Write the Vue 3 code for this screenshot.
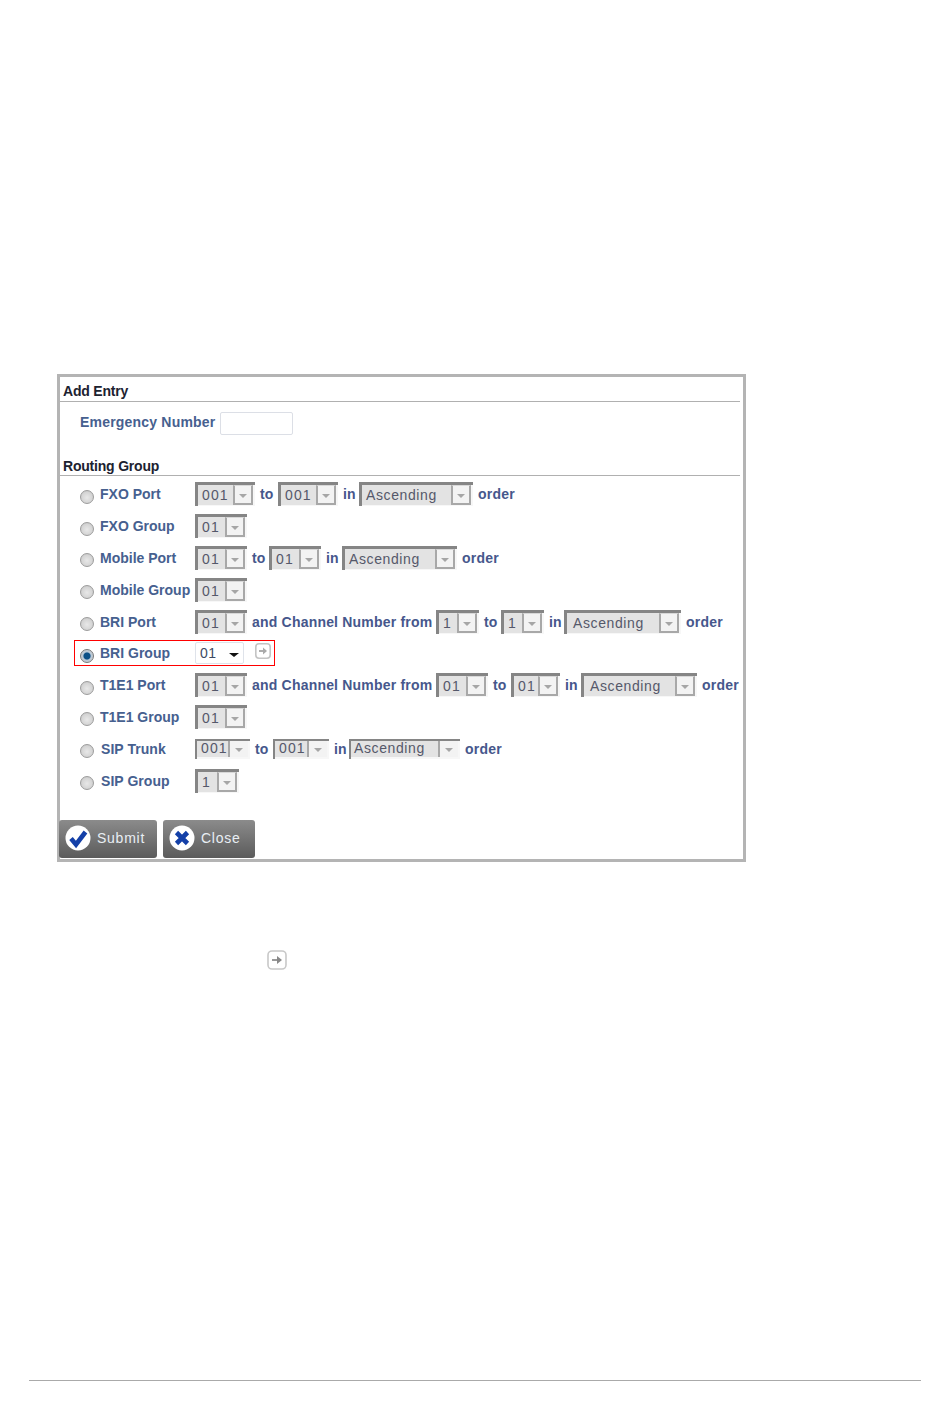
<script setup>
const s = (v, w, pad) => ({ v, w, pad })
const t = (v, w) => ({ text: v, w })
const rows = [
  { label: 'FXO Port', items: [s('001', 60), t('to', 23), s('001', 60), t('in', 21), s('Ascending', 114), t('order')] },
  { label: 'FXO Group', items: [s('01', 52)] },
  { label: 'Mobile Port', items: [s('01', 52), t('to', 22), s('01', 52), t('in', 21), s('Ascending', 115), t('order')] },
  { label: 'Mobile Group', items: [s('01', 52)] },
  { label: 'BRI Port', items: [s('01', 52), t('and Channel Number from', 189), s('1', 43), t('to', 22), s('1', 43), t('in', 20), s('Ascending', 117, 6), t('order')] },
  { label: 'BRI Group', active: true },
  { label: 'T1E1 Port', items: [s('01', 52), t('and Channel Number from', 189), s('01', 52), t('to', 23), s('01', 49), t('in', 21), s('Ascending', 116, 6), t('order')] },
  { label: 'T1E1 Group', items: [s('01', 52)] },
  { label: 'SIP Trunk', small: true, items: [s('001', 55), t('to', 23), s('001', 56), t('in', 20), s('Ascending', 111), t('order')] },
  { label: 'SIP Group', sip: true, items: [s('1', 44)] },
]
</script>

<template>
  <div class="page">
    <section class="panel">
      <h3 class="heading">Add Entry</h3>
      <div class="emergency">
        <span class="label-text">Emergency Number</span>
        <span class="text-input"></span>
      </div>
      <h3 class="heading routing">Routing Group</h3>
      <div class="rows">
        <div
          v-for="row in rows"
          :key="row.label"
          class="row"
          :class="{ 'row-active': row.active, 'row-small': row.small, 'row-sip': row.small || row.sip }"
        >
          <span class="radio" :class="{ checked: row.active }"></span>
          <span class="row-label">{{ row.label }}</span>
          <template v-if="row.active">
            <span class="live-select">
              <span>01</span>
              <i class="live-arrow"></i>
            </span>
            <svg class="go" viewBox="0 0 20 20" width="16" height="16">
              <rect x="1" y="1" width="18" height="18" rx="4" fill="#fff" stroke="#c4c4c4" stroke-width="2" />
              <path d="M5 10h6" stroke="#aaa" stroke-width="2.4" />
              <path d="M10 5.5l5 4.5-5 4.5z" fill="#aaa" />
            </svg>
          </template>
          <template v-else>
            <template v-for="(item, i) in row.items" :key="i">
              <span v-if="item.text" class="word" :style="{ width: item.w ? item.w + 'px' : 'auto' }">{{ item.text }}</span>
              <span v-else class="dis-select" :style="{ width: item.w + 'px' }">
                <span
                  class="dis-value"
                  :class="{ 'dis-digits': item.v !== 'Ascending' }"
                  :style="item.pad ? { paddingLeft: item.pad + 'px' } : null"
                >{{ item.v }}</span>
                <span class="dis-btn"><i></i></span>
              </span>
            </template>
          </template>
        </div>
      </div>
      <div class="actions">
        <button class="btn btn-submit" type="button">
          <svg viewBox="0 0 26 26" width="26" height="26">
            <circle cx="13" cy="13" r="12.5" fill="#fff" />
            <path d="M6 13.5l5 6L20.5 7" fill="none" stroke="#1440a8" stroke-width="4.6" />
          </svg>
          <span>Submit</span>
        </button>
        <button class="btn btn-close" type="button">
          <svg viewBox="0 0 26 26" width="26" height="26">
            <circle cx="13" cy="13" r="12.5" fill="#fff" />
            <path d="M7.5 7.5l11 11M18.5 7.5l-11 11" fill="none" stroke="#1440a8" stroke-width="4.6" />
          </svg>
          <span>Close</span>
        </button>
      </div>
    </section>

    <svg class="go-large" viewBox="0 0 20 20" width="20" height="20">
      <rect x="1" y="1" width="18" height="18" rx="4" fill="#fff" stroke="#c8c8c8" stroke-width="1.6" />
      <path d="M5 10h6" stroke="#999" stroke-width="2" />
      <path d="M10 6l5 4-5 4z" fill="#888" />
    </svg>

    <div class="footer-rule"></div>
  </div>
</template>

<style scoped>
.page {
  height: 1409px;
  box-sizing: border-box;
  padding-top: 374px;
  font-family: "Liberation Sans", Arial, sans-serif;
  background: #fff;
  overflow: hidden;
}
.panel {
  width: 689px;
  height: 488px;
  margin-left: 57px;
  box-sizing: border-box;
  border: 3px solid #b4b4b4;
  display: flex;
  flex-direction: column;
}
.heading {
  margin: 0 3px 0 0;
  height: 25px;
  box-sizing: border-box;
  padding: 6px 0 0 3px;
  border-bottom: 1px solid #b0b0b0;
  font-size: 14px;
  line-height: 17px;
  font-weight: bold;
  color: #1c2230;
  letter-spacing: -0.2px;
}
.routing {
  margin-top: 16px;
  padding-top: 7px;
}
.emergency {
  display: flex;
  align-items: center;
  height: 24px;
  margin-top: 9px;
  padding-left: 20px;
}
.label-text {
  width: 140px;
  flex: none;
  font-size: 14px;
  font-weight: bold;
  color: #46608f;
  letter-spacing: 0.2px;
  white-space: nowrap;
  margin-top: -3px;
}
.text-input {
  width: 73px;
  height: 23px;
  box-sizing: border-box;
  border: 1px solid #dcdfe6;
  border-radius: 2px;
  background: #fff;
}
.rows {
  margin-top: 2.5px;
}
.row {
  height: 31.8px;
  display: flex;
  align-items: center;
  padding-left: 20px;
  font-size: 14px;
  color: #46578c;
  box-sizing: border-box;
  position: relative;
}
.row-active::before {
  content: "";
  position: absolute;
  left: 14px;
  top: 3px;
  width: 201px;
  height: 26px;
  box-sizing: border-box;
  border: 1px solid #f00;
}
.radio {
  width: 14px;
  height: 14px;
  flex: none;
  border-radius: 50%;
  box-sizing: border-box;
  border: 1px solid #9c9c9c;
  background: radial-gradient(circle at 50% 55%, #e8e8e8 0, #d4d4d4 60%, #b8b8b8 100%);
  margin-top: 5px;
}
.radio.checked {
  border-color: #777;
  background: radial-gradient(circle at 50% 50%, #0a4f86 0, #0a4f86 36%, #b9c8d6 48%, #d0d0d0 100%);
}
.row-label {
  flex: none;
  width: 101px;
  padding-left: 6px;
  box-sizing: border-box;
  font-weight: bold;
  color: #46608f;
  white-space: nowrap;
}
.row-sip .row-label {
  padding-left: 7px;
  letter-spacing: 0.05px;
}
.word {
  flex: none;
  box-sizing: border-box;
  padding-left: 5px;
  font-weight: bold;
  color: #46578c;
  white-space: nowrap;
  letter-spacing: 0.2px;
}
.dis-select {
  flex: none;
  height: 24px;
  box-sizing: border-box;
  display: flex;
  align-items: stretch;
  border-top: 3px solid #858585;
  border-left: 3px solid #858585;
  background: #f7f7f7;
}
.dis-value {
  flex: 1;
  padding-left: 4px;
  margin-bottom: 1px;
  font-size: 14px;
  line-height: 20px;
  color: #55586a;
  letter-spacing: 0.6px;
  background: #e3e3e3;
}
.dis-digits {
  letter-spacing: 1.1px;
}
.dis-btn {
  flex: none;
  width: 20px;
  box-sizing: border-box;
  margin: 0 2px 1px 0;
  border: 2px solid #a8a8a8;
  border-top: 1px solid #d8d8d8;
  background: #f3f3f3;
  display: flex;
  align-items: center;
  justify-content: center;
}
.dis-btn i {
  width: 0;
  height: 0;
  border-left: 4px solid transparent;
  border-right: 4px solid transparent;
  border-top: 4px solid #a6a6a6;
  margin-top: 3px;
}
.row-small .dis-select {
  height: 20px;
  border-top-width: 2px;
  border-left-width: 2px;
}
.row-small .dis-value {
  padding-left: 3px;
  line-height: 15px;
  margin-bottom: 2px;
}
.row-small .dis-digits {
  padding-left: 4px;
}
.row-small .dis-btn {
  border: none;
  border-left: 2px solid #a8a8a8;
  margin-bottom: 2px;
}
.live-select {
  flex: none;
  width: 49px;
  height: 22px;
  box-sizing: border-box;
  border: 1px solid #dfe3ea;
  border-radius: 2px;
  display: flex;
  align-items: center;
  justify-content: space-between;
  padding: 0 4px;
  font-size: 14px;
  color: #3d4a63;
  letter-spacing: 0.5px;
  background: #fff;
}
.live-arrow {
  width: 0;
  height: 0;
  border-left: 5px solid transparent;
  border-right: 5px solid transparent;
  border-top: 4px solid #111;
  margin-top: 3px;
}
.go {
  flex: none;
  margin-left: 11px;
  margin-top: -4px;
}
.actions {
  margin-top: auto;
  margin-bottom: 1px;
  margin-left: -1px;
  display: flex;
  gap: 6px;
}
.btn {
  height: 38px;
  box-sizing: border-box;
  border: 0;
  border-radius: 3px;
  background: linear-gradient(#8b8b8b, #5b5b5b);
  color: #e8eef4;
  font-family: inherit;
  font-size: 14px;
  letter-spacing: 0.75px;
  display: flex;
  align-items: center;
  gap: 6px;
  padding: 0 0 2px 6px;
  text-align: left;
}
.btn-submit {
  width: 98px;
}
.btn-close {
  width: 92px;
}
.btn svg {
  flex: none;
}
.go-large {
  display: block;
  margin: 88px 0 0 267px;
}
.footer-rule {
  height: 1px;
  margin: 410px 29px 0;
  background: #aaa;
}
</style>
